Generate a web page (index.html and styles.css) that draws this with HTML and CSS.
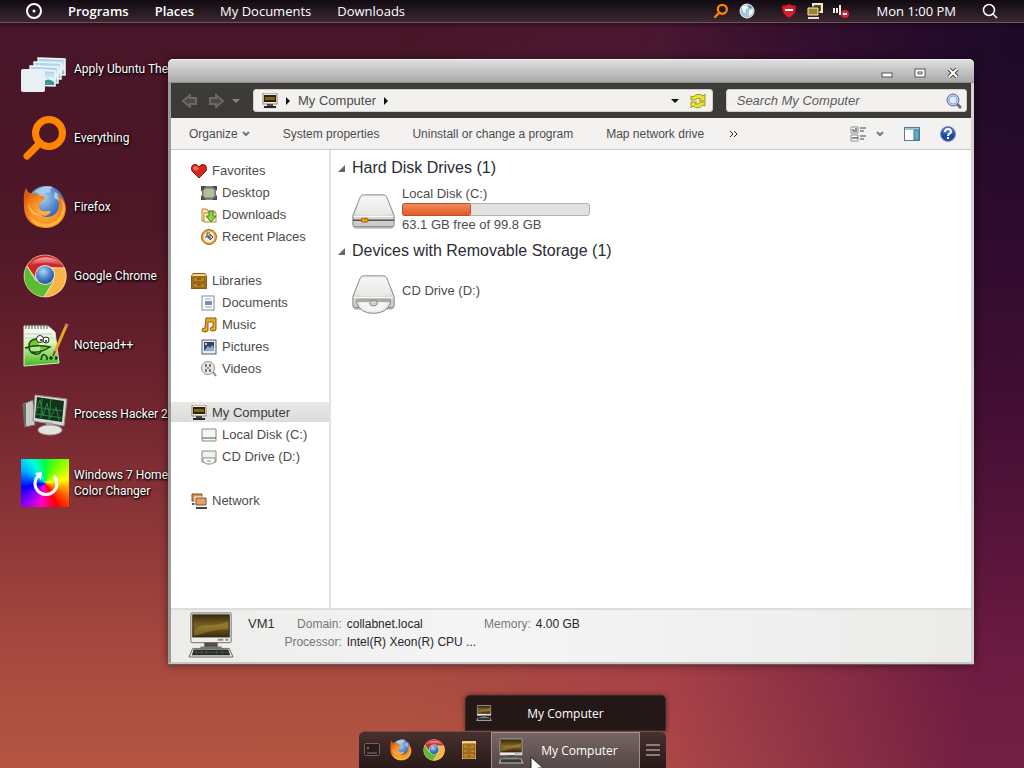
FILE: index.html
```html
<!DOCTYPE html>
<html lang="en">
<head>
    <meta charset="UTF-8">
    <meta name="viewport" content="width=device-width, initial-scale=1.0">
    <title>My Computer</title>
    <link rel="stylesheet" href="styles.css">
</head>
<body>
    <!-- shared icons -->
    <svg class="sprite" aria-hidden="true">
        <defs>
            <linearGradient id="screen" x1="0" y1="0" x2="0" y2="1">
                <stop offset="0" stop-color="#3a2a10"/>
                <stop offset="0.5" stop-color="#7d6422"/>
                <stop offset="1" stop-color="#3c2a0c"/>
            </linearGradient>
            <linearGradient id="metal" x1="0" y1="0" x2="0" y2="1">
                <stop offset="0" stop-color="#f4f5f2"/>
                <stop offset="1" stop-color="#c6c8c4"/>
            </linearGradient>
            <linearGradient id="photo" x1="0" y1="0" x2="0" y2="1">
                <stop offset="0" stop-color="#9fcbe8"/>
                <stop offset="0.6" stop-color="#e4f3f8"/>
                <stop offset="1" stop-color="#5fa6a8"/>
            </linearGradient>
            <radialGradient id="fox" cx="0.5" cy="0.6" r="0.6">
                <stop offset="0" stop-color="#ffb347"/>
                <stop offset="0.6" stop-color="#f58a1f"/>
                <stop offset="1" stop-color="#d95a10"/>
            </radialGradient>
            <radialGradient id="globe" cx="0.4" cy="0.3" r="0.8">
                <stop offset="0" stop-color="#b5d6f5"/>
                <stop offset="0.5" stop-color="#4c84c9"/>
                <stop offset="1" stop-color="#173f86"/>
            </radialGradient>
            <linearGradient id="paper" x1="0" y1="0" x2="0" y2="1">
                <stop offset="0" stop-color="#ffffff"/>
                <stop offset="0.4" stop-color="#e0f7c0"/>
                <stop offset="1" stop-color="#44b81e"/>
            </linearGradient>
            <linearGradient id="gloss" x1="0" y1="0" x2="0" y2="1">
                <stop offset="0" stop-color="#ffffff" stop-opacity="0.6"/>
                <stop offset="1" stop-color="#ffffff" stop-opacity="0"/>
            </linearGradient>
        </defs>
        <symbol id="computer" viewBox="0 0 48 48">
            <rect x="3" y="1" width="42" height="31" rx="1" fill="#efeee9" stroke="#6c6b66"/>
            <rect x="5" y="3" width="38" height="23" fill="url(#screen)" stroke="#2b200c"/>
            <path d="M6 19C15 10 27 17 42 9V18C28 17 18 22 6 25Z" fill="#b99a4a" opacity="0.4"/>
            <path d="M31 29H37M39 29H42" stroke="#8e8d86" stroke-width="2"/>
            <path d="M17 32H31V37H17Z" fill="#4d4d49"/>
            <path d="M13 36H35V39H13Z" fill="#77776f"/>
            <path d="M5 38H43L47 47H1Z" fill="#e3e3df" stroke="#6c6b66"/>
            <path d="M6 39H42L44 45H4Z" fill="#272c29"/>
            <path d="M6 42H42M9 39V44M14 39V44M19 39V44M30 39V44M36 39V44" stroke="#4a524d"/>
        </symbol>
        <symbol id="computer-small" viewBox="0 0 16 16">
            <rect x="1" y="0" width="14" height="11" fill="#f3ecd8" stroke="#8d8671"/>
            <rect x="2" y="2" width="12" height="7" fill="#2c230a"/>
            <path d="M3 4H13V7H3Z" fill="#7d651c"/>
            <rect x="5" y="11" width="6" height="2" fill="#4b4b47"/>
            <path d="M2 13H14L16 16H0Z" fill="#e6e6e0"/>
            <path d="M2 13H14V15H2Z" fill="#23282c"/>
        </symbol>
        <symbol id="everything" viewBox="0 0 48 48">
            <path d="M19 29L6 42" stroke="#ff8400" stroke-width="7" stroke-linecap="round"/>
            <circle cx="28" cy="19" r="13.5" fill="none" stroke="#ff8400" stroke-width="7"/>
        </symbol>
        <symbol id="firefox" viewBox="0 0 48 48">
            <circle cx="25" cy="22" r="19" fill="url(#globe)"/>
            <path d="M14 9C18 4 26 2 32 4C30 6 28 7 30 9C27 10 24 9 22 12C20 10 17 10 14 9ZM34 9C39 11 42 17 41 23C38 22 39 17 35 16C32 15 33 12 34 9Z" fill="#a9cbe9"/>
            <path d="M5 5C6 8 8 10 11 11C14 9 18 11 19 13C23 12 24 14 24 16C21 18 19 19 19 22C17 23 18 27 22 28C25 29 28 27 30 28C29 32 24 34 20 32C25 36 34 34 37 27C39 22 38 15 36 11C41 14 45 19 45 25C45 37 36 45 25 45C12 45 3 36 3 24C3 16 2 11 5 5Z" fill="url(#fox)"/>
            <path d="M39 15C43 21 42 31 36 37C28 43 15 42 8 32C10 40 17 44 25 44C36 44 44 36 44 25C44 21 42 17 39 15Z" fill="#ffcf4f" opacity="0.65"/>
            <path d="M7 20C9 27 15 32 20 32C14 34 8 30 7 20Z" fill="#fdc05a"/>
        </symbol>
        <symbol id="chrome" viewBox="0 0 48 48">
            <circle cx="24" cy="24" r="21" fill="#f9c04a"/>
            <path d="M16 28L24 24L33 29L23 45A21 21 0 0 1 6 14Z" fill="#5cbb32"/>
            <path d="M6 14A21 21 0 0 1 44 16L24 15L17 28Z" fill="#d0252a"/>
            <path d="M44 16A21 21 0 0 1 23 45L33 29L29 16Z" fill="#f9b347"/>
            <path d="M44 16H24M6 14L15 29M23 45L33 29" stroke="#f4efe0" fill="none"/>
            <path d="M8 14C14 3 34 2 42 14C31 10 17 10 8 14Z" fill="url(#gloss)"/>
            <circle cx="24" cy="24" r="21" fill="none" stroke="#f3e3b5" opacity="0.6"/>
            <circle cx="24" cy="23" r="10" fill="#dfe6ec"/>
            <circle cx="24" cy="23" r="9" fill="url(#globe)"/>
        </symbol>
        <symbol id="cabinet" viewBox="0 0 16 16">
            <path d="M2 0H14L16 3V16H0V3Z" fill="#8a5a14"/>
            <path d="M2 1H14L15 3H1Z" fill="#f3d48a"/>
            <rect x="1" y="3" width="14" height="12" fill="#c8902c"/>
            <rect x="2" y="4" width="12" height="5" fill="#b9822a" stroke="#7d540f"/>
            <rect x="2" y="10" width="12" height="5" fill="#b9822a" stroke="#7d540f"/>
            <path d="M6 6H10M6 12H10" stroke="#5c3c06"/>
        </symbol>
        <symbol id="disk" viewBox="0 0 48 40">
            <path d="M2 35L4 38H44L46 35Z" fill="#000000" opacity="0.25"/>
            <path d="M10 4Q11 2 13 2H35Q37 2 38 4L46 24V34Q46 36 44 36H4Q2 36 2 34V24Z" fill="url(#metal)" stroke="#7f817d"/>
            <path d="M10 5H38L44 22Q24 26 4 22Z" fill="#ffffff" opacity="0.4"/>
            <path d="M3 25H45" stroke="#ffffff"/>
        </symbol>
        <symbol id="chevron" viewBox="0 0 8 6">
            <path d="M1 1L4 4L7 1" fill="none" stroke="currentColor" stroke-width="2"/>
        </symbol>
        <symbol id="play" viewBox="0 0 4 8">
            <path d="M0 0L4 4L0 8Z" fill="currentColor"/>
        </symbol>
    </svg>

    <header class="menubar">
        <nav class="menu">
            <button class="menu-logo" aria-label="Main menu">
                <svg viewBox="0 0 16 16" width="16" height="16"><circle cx="8" cy="8" r="7" fill="none" stroke="#fff" stroke-width="2"/><circle cx="8" cy="8" r="1.5" fill="#fff"/></svg>
            </button>
            <a href="#" class="strong">Programs</a>
            <a href="#" class="strong">Places</a>
            <a href="#">My Documents</a>
            <a href="#">Downloads</a>
        </nav>
        <div class="tray">
            <svg viewBox="0 0 48 48"><use href="#everything"/></svg>
            <svg viewBox="0 0 16 16"><circle cx="8" cy="8" r="7" fill="#a9c3dd" stroke="#e8eef4"/><path d="M3 4L7 2L9 5L6 7L7 10L4 9ZM10 7L14 6L13 11L10 13Z" fill="#f4f8fb"/><path d="M9 2L13 4L11 6Z" fill="#5583b5"/></svg>
            <svg class="tray-gap" viewBox="0 0 16 16"><path d="M1 3Q5 3 8 1Q11 3 15 3Q15 12 8 15Q1 12 1 3Z" fill="#d2202c" stroke="#8a0d18"/><path d="M4 7H12" stroke="#fff" stroke-width="2"/></svg>
            <svg viewBox="0 0 16 16"><path d="M6 1H15V9H6Z" fill="#6e5a1a" stroke="#f1ead0" stroke-width="2"/><path d="M1 5H11V12H1Z" fill="#a08428" stroke="#2b2410" stroke-width="3"/><path d="M1 5H11V12H1Z" fill="#a08428" stroke="#f1ead0"/><path d="M1 15H12" stroke="#e4e2d8" stroke-width="2"/></svg>
            <svg viewBox="0 0 16 16"><path d="M1 5V10M4 5V10M7 2V12" stroke="#eeeeee" stroke-width="2"/><circle cx="12" cy="11" r="4" fill="#d8242f"/><path d="M10 11H14" stroke="#fff" stroke-width="2"/></svg>
            <time class="clock">Mon 1:00 PM</time>
            <button class="menu-search" aria-label="Search"><svg viewBox="0 0 16 16" width="16" height="16"><circle cx="7" cy="7" r="5.5" fill="none" stroke="#fff" stroke-width="1.5"/><path d="M11 11L15 15" stroke="#fff" stroke-width="1.5"/></svg></button>
        </div>
    </header>

    <main class="desktop">
        <ul class="shortcuts">
            <li><a href="#">
                <svg viewBox="0 0 48 48">
                    <g fill="url(#photo)" stroke="#f2f8fb" stroke-width="1.5">
                        <path d="M17 13L44 14L44 30L18 29Z"/>
                        <path d="M13 17L40 18L40 34L14 33Z"/>
                        <path d="M9 21L37 22L37 38L10 37Z"/>
                        <path d="M9 25L34 26L34 41L9 40Z"/>
                    </g>
                    <path d="M22 37Q27 32 33 37V40H22Z" fill="#3f9391"/>
                    <rect x="0" y="24" width="24" height="23" rx="2" fill="#e9eff2"/>
                </svg>
                <span class="one-line">Apply Ubuntu The</span>
            </a></li>
            <li><a href="#"><svg><use href="#everything"/></svg><span>Everything</span></a></li>
            <li><a href="#"><svg><use href="#firefox"/></svg><span>Firefox</span></a></li>
            <li><a href="#"><svg><use href="#chrome"/></svg><span class="one-line">Google Chrome</span></a></li>
            <li><a href="#">
                <svg viewBox="0 0 48 48">
                    <path d="M3 5L27 5L34 11L38 42L3 45Z" fill="url(#paper)" stroke="#d9e6cf"/>
                    <path d="M4 13H31M4 17H33" stroke="#b9c7d8"/>
                    <path d="M5 3V8M8 3V8M11 3V8M14 3V8M17 3V8M20 3V8M23 3V8M26 3V8" stroke="#555"/>
                    <path d="M16 18Q8 18 8 25T14 33Q20 34 20 29M4 27Q16 23 29 26Q20 32 11 31" fill="#72c92a" stroke="#194a12" stroke-width="1.5"/>
                    <circle cx="19" cy="18" r="3.5" fill="#fff" stroke="#222"/><circle cx="25" cy="19" r="3" fill="#fff" stroke="#222"/>
                    <circle cx="20" cy="19" r="1" fill="#222"/><circle cx="25" cy="20" r="1" fill="#222"/>
                    <path d="M20 39Q21 32 24 34T26 39M28 37H32M34 37H37M30 35V39M35 35V39" fill="none" stroke="#143e0c" stroke-width="1.5"/>
                    <path d="M46 3L33 33" stroke="#e8a628" stroke-width="3"/><path d="M46 3L45 6" stroke="#d96a7d" stroke-width="3"/><path d="M34 30L32 35" stroke="#5c4220" stroke-width="1.5"/>
                </svg>
                <span>Notepad++</span>
            </a></li>
            <li><a href="#">
                <svg viewBox="0 0 48 48">
                    <path d="M2 14L12 10L14 35L4 37Z" fill="#c9cac5" stroke="#6f706c"/>
                    <path d="M2 14L5 13V37L3 37Z" fill="#6a6b67"/>
                    <path d="M14 5L46 9L43 36L12 31Z" fill="#d8d9d4" stroke="#8b8c86"/>
                    <path d="M16 7L43 11L41 32L14 28Z" fill="#12331b"/>
                    <path d="M15 22L19 10L22 26L26 13L29 28L35 17L38 30M15 17L41 21M15 24L41 28M21 8L20 28M30 9L28 30" stroke="#2c8244" fill="none"/>
                    <path d="M25 32L32 33V38H25Z" fill="#9fa09a"/>
                    <ellipse cx="29" cy="40" rx="12" ry="5" fill="#e2e3df" stroke="#999a95"/>
                </svg>
                <span class="one-line">Process Hacker 2</span>
            </a></li>
            <li><a href="#">
                <span class="wheel"><svg viewBox="0 0 48 48"><path d="M33 17A11 11 0 1 1 17 17" fill="none" stroke="#fff" stroke-width="3"/><path d="M14 14L21 13L20 21Z" fill="#fff"/></svg></span>
                <span class="one-line">Windows 7 Home<br>Color Changer</span>
            </a></li>
        </ul>

        <section class="window" aria-label="My Computer">
            <div class="titlebar">
                <button aria-label="Minimize"><svg viewBox="0 0 12 10"><rect x="1" y="5" width="10" height="4" fill="#fff" stroke="#555"/></svg></button>
                <button aria-label="Maximize"><svg viewBox="0 0 12 10"><rect x="1" y="1" width="10" height="8" fill="#fff" stroke="#555"/><rect x="4" y="4" width="4" height="2" fill="#fff" stroke="#555"/></svg></button>
                <button aria-label="Close"><svg viewBox="0 0 12 10"><path d="M2 1L10 9M10 1L2 9" stroke="#444" stroke-width="4"/><path d="M2 1L10 9M10 1L2 9" stroke="#fff" stroke-width="2"/></svg></button>
            </div>

            <div class="navbar">
                <div class="history">
                    <button aria-label="Back"><svg viewBox="0 0 16 14" width="16" height="14"><path d="M1 7L8 1V4H14V10H8V13Z" fill="#4b4a47" stroke="#6b6a66" stroke-width="2"/></svg></button>
                    <button aria-label="Forward"><svg viewBox="0 0 16 14" width="16" height="14"><path d="M15 7L8 1V4H2V10H8V13Z" fill="#4b4a47" stroke="#6b6a66" stroke-width="2"/></svg></button>
                    <button class="recent" aria-label="Recent pages"><svg viewBox="0 0 8 4" width="8" height="4"><path d="M0 0H8L4 4Z" fill="#85847f"/></svg></button>
                </div>
                <div class="address">
                    <svg class="icon"><use href="#computer-small"/></svg>
                    <svg class="arrow"><use href="#play"/></svg>
                    <a href="#">My Computer</a>
                    <svg class="arrow"><use href="#play"/></svg>
                    <button class="history-toggle" aria-label="Previous locations"><svg viewBox="0 0 8 4" width="8" height="4"><path d="M0 0H8L4 4Z" fill="#111"/></svg></button>
                    <button aria-label="Refresh"><svg viewBox="0 0 16 16" width="16" height="16"><path d="M1 7V3L3 4Q8 -1 13 3L15 1V8H9L11 6Q8 4 5 7ZM15 9V13L13 12Q8 17 3 13L1 15V9H7L5 11Q8 12 11 9Z" fill="#e9e23a" stroke="#a19a10"/></svg></button>
                </div>
                <div class="search">
                    <input type="text" aria-label="Search My Computer" placeholder="Search My Computer">
                    <button aria-label="Search"><svg viewBox="0 0 16 16" width="16" height="16"><path d="M10 10L15 15" stroke="#6a6f7c" stroke-width="3"/><circle cx="7" cy="7" r="6" fill="#b9d0f2" stroke="#596a92"/><circle cx="7" cy="7" r="4" fill="#dfeafb" stroke="#8ea9dc"/></svg></button>
                </div>
            </div>

            <div class="toolbar">
                <button>Organize <svg class="chevron"><use href="#chevron"/></svg></button>
                <button>System properties</button>
                <button>Uninstall or change a program</button>
                <button>Map network drive</button>
                <button class="more" aria-label="More commands"><svg viewBox="0 0 8 6" width="8" height="6"><path d="M1 0L4 3L1 6M5 0L8 3L5 6" fill="none" stroke="#222"/></svg></button>
                <div class="view-tools">
                    <button aria-label="Change view"><svg viewBox="0 0 16 16" width="16" height="16"><path d="M1 1H8V7H1ZM1 9H8V15H1Z" fill="#fff" stroke="#8a8f94"/><path d="M3 5V3M3 5H7M5 3H7M3 11V13M5 13V11M7 13V11" fill="none" stroke="#222"/><path d="M10 2H16M10 5H14M10 10H16M10 13H14" stroke="#444"/></svg><svg class="chevron"><use href="#chevron"/></svg></button>
                    <button aria-label="Show the preview pane"><svg viewBox="0 0 16 14" width="16" height="14"><rect x="0.5" y="0.5" width="15" height="13" fill="#fff" stroke="#527f93"/><path d="M1 1H15V3H1Z" fill="#9cc5d3"/><path d="M10 3H15V13H10Z" fill="#64adbd" stroke="#3c7b8e"/></svg></button>
                    <button aria-label="Help"><svg viewBox="0 0 16 16" width="16" height="16"><circle cx="8" cy="8" r="7.5" fill="#2547a5" stroke="#8295c6"/><path d="M2 7A6 6 0 0 1 14 7Q8 9 2 7Z" fill="#6a8ad6" opacity="0.6"/><path d="M5 6Q5 3 8 3T11 6Q11 7 9 8Q8 9 8 10M8 11V13" fill="none" stroke="#fff" stroke-width="2"/></svg></button>
                </div>
            </div>

            <div class="content">
                <nav class="sidebar">
                    <ul>
                        <li><a href="#"><svg viewBox="0 0 16 16"><path d="M8 15L1 8Q-1 4 2 2Q6 0 8 4Q10 0 14 2Q17 4 15 8Z" fill="#d4281f" stroke="#8e1712"/><path d="M2 6Q2 3 5 3Q7 4 8 6Q5 9 2 6Z" fill="#f2887f" opacity="0.7"/></svg>Favorites</a>
                            <ul>
                                <li><a href="#"><svg viewBox="0 0 16 16"><path d="M1 1H15V15H1Z" fill="#848982"/><rect x="2" y="3" width="12" height="10" rx="3" fill="#b4bd9d" stroke="#697158"/><path d="M0 1H5L1 6H0ZM11 1H16V6ZM0 10L5 15H0ZM16 10V15H11Z" fill="#454c5c"/></svg>Desktop</a></li>
                                <li><a href="#"><svg viewBox="0 0 16 16"><path d="M1 2H6L7 4H14V14H1Z" fill="#f8dfa3" stroke="#b98b3a"/><path d="M3 6H15V15H3Z" fill="#fdf1cf" stroke="#b98b3a"/><path d="M8 4H12V9H15L10 15L5 9H8Z" fill="#8fd14a" stroke="#3f8316"/></svg>Downloads</a></li>
                                <li><a href="#"><svg viewBox="0 0 16 16"><circle cx="8" cy="8" r="6.5" fill="#f6f1e6" stroke="#f0a030" stroke-width="2"/><circle cx="8" cy="8" r="7.5" fill="none" stroke="#a5661a"/><path d="M9 4H6V7H8V10M4 8H8M9 5L12 8L9 11Z" fill="none" stroke="#3a3f4c"/></svg>Recent Places</a></li>
                            </ul>
                        </li>
                        <li><a href="#"><svg viewBox="0 0 16 16"><use href="#cabinet"/></svg>Libraries</a>
                            <ul>
                                <li><a href="#"><svg viewBox="0 0 16 16"><rect x="1" y="1" width="12" height="14" fill="#fff" stroke="#7889a2"/><path d="M4 4H10M4 12H11" stroke="#8fa0b8"/><path d="M4 6H11V10H4Z" fill="#7d8fac"/></svg>Documents</a></li>
                                <li><a href="#"><svg viewBox="0 0 16 16"><path d="M5 1H15V12A3 2 0 1 1 12 10V5H7V13A3 2 0 1 1 4 11Z" fill="#e9a62c" stroke="#8c5a0c"/></svg>Music</a></li>
                                <li><a href="#"><svg viewBox="0 0 16 16"><rect x="1" y="1" width="14" height="14" fill="#e6ebf2" stroke="#4e5e78"/><rect x="3" y="3" width="10" height="9" fill="#33445f"/><path d="M3 12L7 7L9 9L11 6L13 9V12Z" fill="#91a9c8"/><circle cx="5" cy="5" r="1" fill="#fff"/></svg>Pictures</a></li>
                                <li><a href="#"><svg viewBox="0 0 16 16"><circle cx="7" cy="7" r="6.5" fill="#e8e8e6" stroke="#8c8c88"/><circle cx="7" cy="7" r="1" fill="#777"/><path d="M4 3H6V6H4ZM8 3H10V6H8ZM4 8H6V11H4ZM8 8H10V11H8Z" fill="#777a7b"/><path d="M12 11L15 15" stroke="#8c8c88" stroke-width="2"/></svg>Videos</a></li>
                            </ul>
                        </li>
                        <li><a href="#" class="active"><svg><use href="#computer-small"/></svg>My Computer</a>
                            <ul>
                                <li><a href="#"><svg viewBox="0 0 16 16"><path d="M1 2H15V14H1Z" fill="#f6f6f4" stroke="#8a8c88"/><path d="M1 11H15" stroke="#555"/></svg>Local Disk (C:)</a></li>
                                <li><a href="#"><svg viewBox="0 0 16 16"><path d="M1 2H15V13H1Z" fill="#f0f0ee" stroke="#8a8c88"/><path d="M2 9H14V13L10 15H6L2 13Z" fill="#fff" stroke="#8a8c88"/><path d="M6 12H10" stroke="#8a8c88"/></svg>CD Drive (D:)</a></li>
                            </ul>
                        </li>
                        <li><a href="#"><svg viewBox="0 0 16 16"><path d="M1 1H11V8H1Z" fill="#e78b3b" stroke="#645547"/><path d="M1 11H5" stroke="#555" stroke-width="2"/><path d="M5 5H15V12H5Z" fill="#f0a055" stroke="#fff" stroke-width="3"/><path d="M5 5H15V12H5Z" fill="#f0a055" stroke="#645547"/><path d="M5 15H16" stroke="#444" stroke-width="2"/></svg>Network</a></li>
                    </ul>
                </nav>

                <div class="drives">
                    <h2><svg class="fold" viewBox="0 0 7 7"><path d="M7 0V7H0Z" fill="#666"/></svg>Hard Disk Drives (1)</h2>
                    <a href="#" class="drive">
                        <svg viewBox="0 0 48 40"><use href="#disk"/><path d="M2 29H46" stroke="#555" stroke-width="1.5"/><rect x="11" y="27" width="7" height="4" rx="1" fill="#f29a1d" stroke="#a35f08"/></svg>
                        <span class="drive-info">
                            <span>Local Disk (C:)</span>
                            <span class="usage"><span class="usage-fill" style="width: 36%"></span></span>
                            <span>63.1 GB free of 99.8 GB</span>
                        </span>
                    </a>
                    <h2><svg class="fold" viewBox="0 0 7 7"><path d="M7 0V7H0Z" fill="#666"/></svg>Devices with Removable Storage (1)</h2>
                    <a href="#" class="drive cd">
                        <svg viewBox="0 0 48 44"><use href="#disk" width="48" height="40"/><path d="M6 27H42V31Q38 42 24 42Q10 42 6 31Z" fill="#e9eae7" stroke="#7f817d"/><path d="M6 27H42V30H6Z" fill="#a9aba7"/><path d="M9 30H39Q36 40 24 40Q12 40 9 30Z" fill="#f3f4f1"/><ellipse cx="24" cy="31" rx="4" ry="3" fill="#d2d4d0" stroke="#7f817d"/></svg>
                        <span class="drive-info">
                            <span>CD Drive (D:)</span>
                        </span>
                    </a>
                </div>
            </div>

            <footer class="details">
                <svg class="details-icon"><use href="#computer"/></svg>
                <strong>VM1</strong>
                <dl>
                    <dt>Domain:</dt>
                    <dd>collabnet.local</dd>
                    <dt>Memory:</dt>
                    <dd>4.00 GB</dd>
                    <dt>Processor:</dt>
                    <dd>Intel(R) Xeon(R) CPU ...</dd>
                </dl>
            </footer>
        </section>
    </main>

    <footer class="dock">
        <button class="preview"><svg><use href="#computer"/></svg><span>My Computer</span></button>
        <div class="dock-bar">
            <div class="launchers">
                <button aria-label="Show desktop"><svg class="small" viewBox="0 0 16 14"><rect x="0.5" y="0.5" width="15" height="12" rx="1" fill="#2b1b1a" stroke="#75625e"/><path d="M3 4L5 5L3 6M3 10H13" fill="none" stroke="#8e7c78"/></svg></button>
                <button aria-label="Firefox"><svg><use href="#firefox"/></svg></button>
                <button aria-label="Google Chrome"><svg><use href="#chrome"/></svg></button>
                <button aria-label="Libraries"><svg class="files" viewBox="0 0 16 18"><path d="M1 0H15V18H1Z" fill="#f0cf86"/><path d="M2 3H14V17H2Z" fill="#b9822a" stroke="#8a5a14"/><path d="M2 8H14M2 12H14" stroke="#7d540f"/><path d="M6 5H10M6 10H10M6 15H10" stroke="#7d540f"/></svg></button>
            </div>
            <button class="task"><svg><use href="#computer"/></svg><span>My Computer</span></button>
            <button class="dock-menu" aria-label="Dock menu"><svg viewBox="0 0 14 12" width="14" height="12"><path d="M0 1H14M0 6H14M0 11H14" stroke="#8b7d77" stroke-width="2"/></svg></button>
        </div>
        <svg class="cursor" viewBox="0 0 12 19"><path d="M1 0V16L5 12L8 19L11 18L8 11H13Z" fill="#fff" stroke="#222"/></svg>
    </footer>
</body>
</html>
```
FILE: styles.css
```css
* {
    box-sizing: border-box;
}
body {
    margin: 0;
    height: 100vh;
    position: relative;
    overflow: hidden;
    display: flex;
    flex-direction: column;
    font-family: "Open Sans", "Noto Sans", sans-serif;
    font-size: 12px;
    color: #fff;
    background:
        radial-gradient(circle at 100% 5%, rgba(20, 10, 36, 0.85), transparent 50%),
        linear-gradient(to right, transparent 40%, rgba(160, 45, 85, 0.35) 65%, rgba(85, 8, 66, 0.7) 95%),
        linear-gradient(to bottom, #461628 0%, #4e1728 30%, #6c232d 50%, #8c3638 68%, #a8493f 85%, #b45642 100%);
}
a {
    color: inherit;
    text-decoration: none;
}
ul {
    list-style: none;
    margin: 0;
    padding: 0;
}
button {
    font: inherit;
    color: inherit;
    background: none;
    border: none;
    padding: 0;
    display: flex;
    align-items: center;
    cursor: default;
}
svg {
    flex: none;
    display: block;
}
.sprite {
    position: absolute;
    width: 0;
    height: 0;
}

/* top menu bar */
.menubar {
    display: flex;
    justify-content: space-between;
    height: 23px;
    padding: 0 26px;
    font-size: 13px;
    background: linear-gradient(to bottom, #100b11, #3c2832);
    border-bottom: 1px solid #71515d;
    box-shadow: 0 1px 4px rgba(0, 0, 0, 0.5);
}
.menu,
.tray {
    display: flex;
    align-items: center;
}
.menu {
    gap: 26px;
}
.strong {
    font-weight: 600;
}
.tray {
    gap: 10px;
}
.tray > svg {
    width: 16px;
    height: 16px;
}
.tray .tray-gap {
    margin-left: 16px;
}
.clock {
    margin-left: 18px;
}
.menu-search {
    margin-left: 16px;
}

/* desktop shortcuts */
.desktop {
    flex: 1;
}
.shortcuts {
    display: flex;
    flex-direction: column;
    gap: 21px;
    padding: 22px 21px;
    font-family: Roboto, "Open Sans", sans-serif;
}
.shortcuts a {
    display: flex;
    align-items: center;
    gap: 5px;
    line-height: 16px;
    text-shadow: 1px 1px 2px #000, 0 1px 3px #000;
}
.shortcuts svg {
    width: 48px;
    height: 48px;
}
.one-line {
    white-space: nowrap;
}
.wheel {
    background: conic-gradient(from 0deg, #0f4, #6f0 30deg, #ff0 80deg, #f60 120deg, #f00 150deg, #f0c 190deg, #80f 225deg, #00f 260deg, #0af 300deg, #0fd 330deg, #0f4);
}

/* explorer window */
.window {
    position: absolute;
    top: 59px;
    right: 50px;
    bottom: 104px;
    left: 168px;
    display: flex;
    flex-direction: column;
    font-family: "Liberation Sans", Arial, sans-serif;
    font-size: 13px;
    color: #4c4c4c;
    background: #fff;
    border: solid #9a9a98;
    border-width: 0 3px 2px;
    border-right-color: #d4d4d3;
    border-bottom-color: #c3c8c3;
    border-radius: 5px 5px 0 0;
    box-shadow: 0 1px 0 #6e5558, 0 1px 8px rgba(0, 0, 0, 0.5);
}
.titlebar {
    display: flex;
    justify-content: flex-end;
    align-items: center;
    gap: 21px;
    height: 24px;
    margin: 0 -3px;
    padding: 3px 15px 0;
    border-top: 1px solid #f2f2f2;
    border-bottom: 1px solid #8f8f8e;
    border-radius: 5px 5px 0 0;
    background: linear-gradient(to bottom, #dedede, #a9a9a9);
}
.titlebar svg {
    width: 12px;
    height: 10px;
}
.navbar {
    display: flex;
    align-items: center;
    gap: 13px;
    height: 35px;
    padding: 0 4px 0 11px;
    background: #3c3b37;
}
.history {
    display: flex;
    gap: 10px;
}
.recent {
    margin-left: -2px;
}
.address,
.search {
    display: flex;
    align-items: center;
    height: 23px;
    padding: 0 6px 0 8px;
    border: 1px solid #d0cfca;
    border-radius: 3px;
    background: #f2f1f0;
}
.address {
    flex: 65;
    gap: 8px;
}
.search {
    flex: 33;
    min-width: 0;
    padding: 0 4px 0 10px;
}
.icon {
    width: 16px;
    height: 16px;
}
.arrow {
    width: 4px;
    height: 8px;
    color: #111;
}
.history-toggle {
    margin-left: auto;
    margin-right: 3px;
}
.search input {
    flex: 1;
    min-width: 0;
    padding: 0;
    border: none;
    outline: none;
    background: none;
    font: italic 13px "Liberation Sans", Arial, sans-serif;
}
.search input::placeholder {
    color: #5c5c5c;
    opacity: 1;
}
.toolbar {
    display: flex;
    align-items: center;
    gap: 33px;
    height: 32px;
    padding: 0 15px 0 18px;
    font-size: 12px;
    background: #f3f2f1;
    border-bottom: 1px solid #c9c8c6;
}
.toolbar button {
    gap: 4px;
    white-space: nowrap;
}
.chevron {
    width: 8px;
    height: 6px;
    color: #777;
}
.toolbar .more {
    margin-left: -8px;
}
.view-tools {
    display: flex;
    align-items: center;
    gap: 20px;
    margin-left: auto;
}
.view-tools button:first-child {
    gap: 10px;
}
.content {
    flex: 1;
    display: flex;
    min-height: 0;
}
.sidebar {
    width: 160px;
    padding-top: 10px;
    border-right: 2px solid #e2e2e2;
    line-height: 22px;
}
.sidebar > ul {
    display: flex;
    flex-direction: column;
    gap: 22px;
}
.sidebar a {
    display: flex;
    align-items: center;
    gap: 5px;
    height: 22px;
    padding-left: 20px;
    white-space: nowrap;
}
.sidebar ul ul a {
    padding-left: 30px;
}
.sidebar svg {
    width: 16px;
    height: 16px;
}
.sidebar .active {
    background: linear-gradient(to bottom, #e8e8e6, #dcdcda) no-repeat;
    background-size: 100% 20px;
    color: #3c3c3c;
}
.drives {
    flex: 1;
    padding: 8px 7px;
}
.drives h2 {
    display: flex;
    align-items: center;
    gap: 7px;
    margin: 0;
    font-size: 16px;
    font-weight: normal;
    line-height: 20px;
    color: #2b2b35;
}
.fold {
    width: 7px;
    height: 7px;
}
.drive {
    display: flex;
    align-items: center;
    gap: 6px;
    height: 63px;
    padding: 0 13px;
}
.drive > svg {
    width: 45px;
    margin-top: 4px;
}
.cd .drive-info {
    padding-bottom: 4px;
}
.drive-info {
    display: flex;
    flex-direction: column;
    line-height: 18px;
}
.usage {
    width: 188px;
    height: 13px;
    border: 1px solid #b5b1ad;
    border-radius: 3px;
    background: #e3e1e0;
}
.usage-fill {
    display: block;
    height: 11px;
    border-radius: 2px;
    background: linear-gradient(to bottom, #f28a5c, #e05a24);
    box-shadow: 0 0 0 1px #b4512a;
}
.details {
    display: flex;
    align-items: flex-start;
    height: 54px;
    padding: 2px 17px;
    border-top: 2px solid #dedddc;
    background: linear-gradient(to right, #ececeb, #f5f5f5 40%, #ebebea);
}
.details-icon {
    width: 46px;
    height: 46px;
}
.details strong {
    margin-left: 14px;
    font-weight: normal;
    line-height: 24px;
    color: #333;
}
.details dl {
    display: grid;
    grid-template-columns: 62px 132px 47px 132px;
    column-gap: 5px;
    margin: 3px 0 0 5px;
    font-size: 12px;
    line-height: 18px;
}
.details dt {
    text-align: right;
    color: #777;
}
.details dd {
    margin: 0;
    white-space: nowrap;
    color: #26262e;
}

/* dock */
.dock {
    position: absolute;
    bottom: 0;
    left: 50%;
    width: 307px;
    margin-left: -153px;
    display: flex;
    flex-direction: column;
    align-items: flex-end;
}
.preview {
    width: 201px;
    height: 36px;
    padding: 0 26px 0 10px;
    background: #231817;
    border: 1px solid #3a2825;
    border-radius: 5px 5px 0 0;
    box-shadow: 0 0 5px rgba(0, 0, 0, 0.5);
}
.preview svg {
    width: 16px;
    height: 16px;
}
.preview span,
.task span {
    flex: 1;
    text-align: center;
}
.dock-bar {
    display: flex;
    width: 100%;
    height: 37px;
    background: linear-gradient(to bottom, #48302e, #281a19);
    border-top: 1px solid #6d504b;
    border-radius: 6px 6px 0 0;
}
.launchers {
    flex: 1;
    display: flex;
    align-items: center;
    gap: 9px;
    padding-left: 5px;
}
.launchers svg {
    width: 24px;
    height: 24px;
}
.launchers .small {
    width: 16px;
    height: 14px;
}
.launchers .files {
    width: 16px;
    height: 18px;
    margin-left: 6px;
}
.task {
    width: 149px;
    padding: 0 4px 0 6px;
    background: linear-gradient(to bottom, #766664, #544746);
    border: 1px solid #9c8e8b;
    border-bottom: none;
}
.task svg {
    width: 26px;
    height: 26px;
}
.dock-menu {
    width: 26px;
    justify-content: center;
}
.cursor {
    position: absolute;
    top: 62px;
    left: 171px;
    width: 12px;
    height: 19px;
}
```
